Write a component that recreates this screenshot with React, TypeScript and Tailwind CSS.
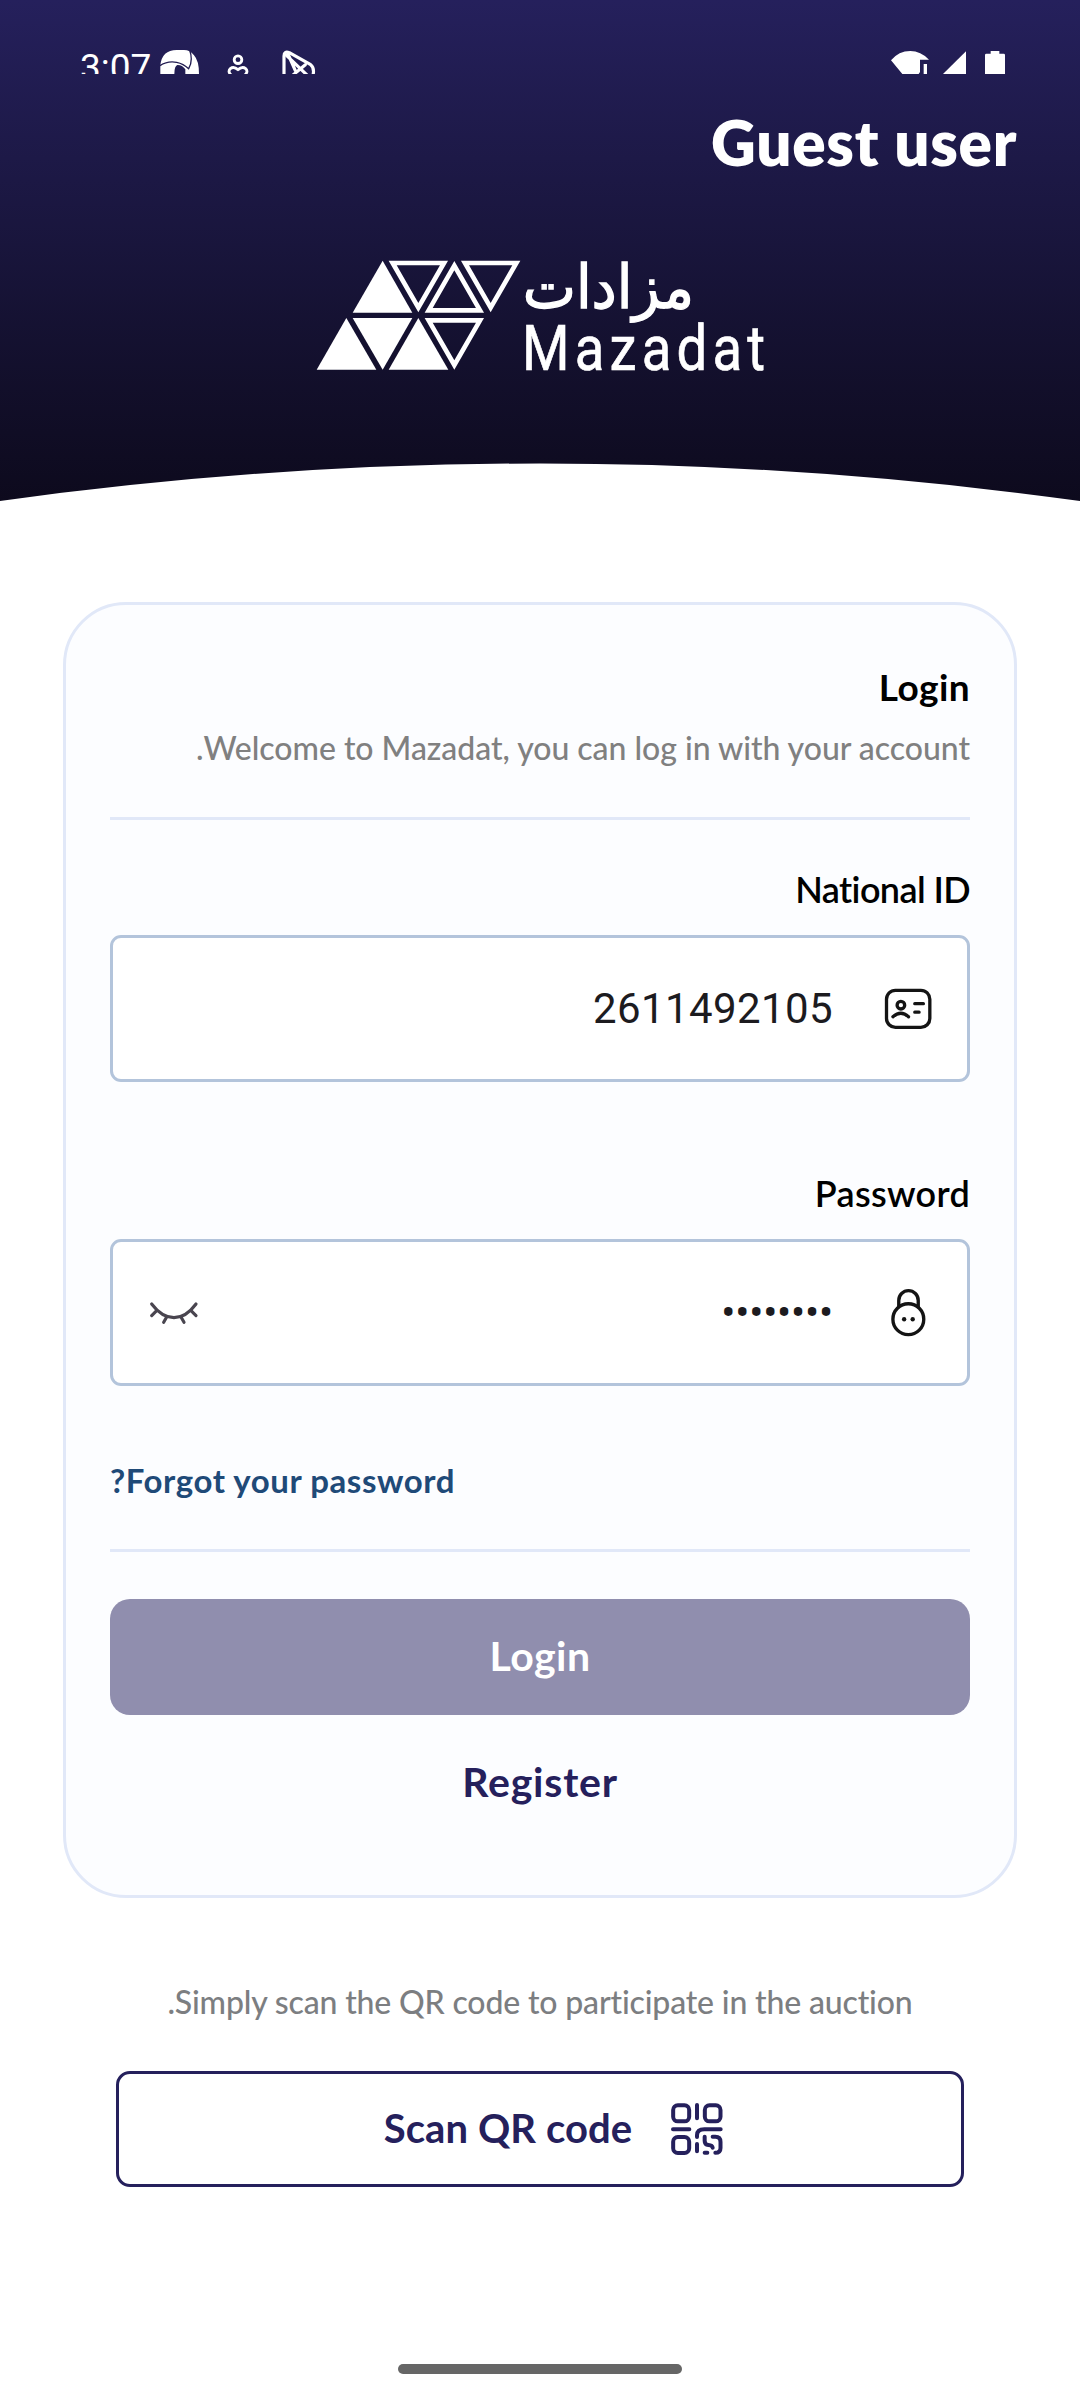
import type { ReactNode } from "react";

function StatusBar() {
  return (
    <div dir="ltr" className="flex h-[74px] w-full items-start overflow-hidden text-white">
      <span className="mt-[48px] ml-[80px] w-[80px] font-[Roboto,sans-serif] text-[37px] leading-[40px] tracking-[0px] whitespace-nowrap">
        3:07
      </span>
      <svg className="mt-[48px] h-[26px] w-[157px] shrink-0" viewBox="300 54 471 78" fill="none">
        <path
          d="M301 106Q306 60 350 60H372Q390 60 402 76Q417 92 417 132H376V118Q366 104 352 105Q343 108 343 132H301Z"
          fill="#fff"
        />
        <path d="M300 107Q322 92 350 97Q370 101 386 116Q400 92 389 60" stroke="#221d52" strokeWidth="4" />
        <g stroke="#fff" strokeWidth="8.5" strokeLinecap="round" strokeLinejoin="round">
          <circle cx="534" cy="89" r="11.5" />
          <path d="M514 136Q502 124 511 116Q521 108 534 119Q547 108 557 116Q566 124 554 136" />
        </g>
        <g stroke="#fff" strokeWidth="9.5" strokeLinecap="round" strokeLinejoin="round">
          <path d="M672 140V78Q672 62 688 68L752 104Q764 113 759 136" />
          <path d="M677 74L742 136M684 72L706 122M736 104L698 136" />
        </g>
      </svg>
      <svg className="mt-[50px] mr-[74px] ml-auto h-[24px] w-[116px] shrink-0" viewBox="630 60 348 72" fill="#fff">
        <path d="M633 91Q656 63 691 63Q722 63 747 89H720V126L716 132H667Z" />
        <path d="M731 102H741V132H731Z" />
        <path d="M789 132L858 64V132Z" />
        <path d="M915 75Q915 71 919 71H932V63H958V71H971Q975 71 975 75V132H915Z" />
      </svg>
    </div>
  );
}

function Logo() {
  return (
    <svg className="h-[150px] w-[480px]" viewBox="0 0 1440 450" fill="#fff" direction="ltr">
      <path d="M248 62L337 218H158Z" />
      <path d="M139 234L229 389H50Z" />
      <path d="M158 234H337L248 389Z" />
      <path d="M355 234L445 389H266Z" />
      <g fill="none" stroke="#fff" strokeWidth="14">
        <path d="M278 69H432L355 203Z" />
        <path d="M463 77L540 211H386Z" />
        <path d="M495 69H649L572 203Z" />
        <path d="M386 241H540L463 375Z" />
      </g>
      <text
        x="1182"
        y="203"
        direction="rtl"
        fontFamily="DejaVu Sans, sans-serif"
        fontSize="180"
        textLength="514"
        lengthAdjust="spacingAndGlyphs"
        stroke="#fff"
        strokeWidth="4"
      >
        مزادات
      </text>
      <text
        transform="translate(666 389) scale(0.86 1)"
        fontFamily="Roboto, sans-serif"
        fontSize="190"
        textLength="848"
        lengthAdjust="spacing"
        stroke="#fff"
        strokeWidth="2"
      >
        Mazadat
      </text>
    </svg>
  );
}

function IdCardIcon() {
  return (
    <svg className="h-[42px] w-[49px] shrink-0" viewBox="970 203 146 127" fill="none" stroke="#141414" strokeWidth="10" strokeLinecap="round">
      <rect x="976.5" y="210" width="131" height="112" rx="27" />
      <circle cx="1020" cy="255" r="11.5" />
      <path d="M996 290Q1020 269 1043 290M1062 250.500H1088M1062 276H1075" />
    </svg>
  );
}

function LockIcon() {
  return (
    <svg className="mx-[6px] h-[49px] w-[37px] shrink-0" viewBox="627 387 110 146" fill="none" stroke="#141414" strokeWidth="10">
      <path d="M653 444V424A29 29 0 0 1 711 424V444" />
      <circle cx="681.500" cy="480" r="46" />
      <circle cx="669" cy="480" r="6.500" fill="#141414" stroke="none" />
      <circle cx="694.500" cy="480" r="6.500" fill="#141414" stroke="none" />
    </svg>
  );
}

function ClosedEyeIcon() {
  return (
    <svg className="h-[24px] w-[50px] shrink-0" viewBox="176 244 150 72" fill="none" stroke="#49454f" strokeWidth="9.500" strokeLinecap="round">
      <path d="M184 253Q215 294 251 294Q287 294 317 253" />
      <path d="M199 273L184 288M229 292L220 308M272 292L281 308M302 273L317 288" />
    </svg>
  );
}

function QrIcon() {
  return (
    <svg className="h-[54px] w-[54px] shrink-0" viewBox="899 124 162 162" fill="none" stroke="#25205c" strokeWidth="12" strokeLinecap="round">
      <rect x="908.500" y="134" width="48" height="48" rx="14" />
      <rect x="1003.500" y="134" width="47" height="48" rx="14" />
      <rect x="908.500" y="229" width="48" height="48" rx="14" />
      <path d="M980 133V173M908 206H957M1051 206H1002Q980 206 980 224V229M980 250V272" />
      <path d="M1027 228.500H1035Q1050.500 228.500 1050.500 244V262Q1050.500 276.500 1035 276.500" />
      <path d="M1003 228V240Q1003 252 1014 253Q1026 254 1027 261M1003 276.500H1011" />
    </svg>
  );
}

function Field({ label, icon, children, trailing }: { label: string; icon: ReactNode; children: ReactNode; trailing?: ReactNode }) {
  return (
    <div>
      <div className="text-[36px] leading-[44px] font-semibold text-black">{label}</div>
      <div className="mt-6 flex h-[147px] items-center rounded-[11px] border-[3px] border-[#b3c4db] bg-white pr-[34px] pl-[36px] text-[#1c1b1f]">
        {icon}
        <div className="mr-[51px] font-[Roboto,sans-serif] text-[42px] leading-none">{children}</div>
        <div className="mr-auto flex">{trailing}</div>
      </div>
    </div>
  );
}

export default function App() {
  return (
    <div dir="rtl" className="flex h-[2400px] w-[1080px] flex-col overflow-hidden bg-white font-[Lato,sans-serif]">
      <header className="flex h-[501px] shrink-0 flex-col bg-linear-to-b from-[#25205c] to-[#0d0a1d]">
        <StatusBar />
        <h1 className="mt-[32px] pr-[63px] text-[62px] leading-[72px] font-extrabold tracking-[0.7px] text-white">
          Guest user
        </h1>
        <div className="mt-[62px] flex justify-center">
          <Logo />
        </div>
        <svg className="mt-auto block h-[38px] w-full" viewBox="0 0 1080 38" fill="#fff">
          <path d="M0 38Q540 -37 1080 38Z" />
        </svg>
      </header>

      <main className="flex flex-col">
        <section className="mx-[63px] mt-[101px] flex h-[1296px] flex-col rounded-[63px] border-[3px] border-[#e1e8f8] bg-[#fcfdff] px-[44px] pt-[60px]">
          <h2 className="text-[37px] leading-[44px] font-bold tracking-[0.4px] text-black">Login</h2>
          <p className="mt-[19px] text-[32px] leading-[40px] font-medium tracking-[-0.03px] whitespace-nowrap text-[#808080]">
            Welcome to Mazadat, you can log in with your account.
          </p>
          <div className="mt-[49px] h-[3px] bg-[#e1e8f8]" />

          <div className="mt-[47px] tracking-[-0.6px]">
            <Field label="National ID" icon={<IdCardIcon />}>
              <span className="tracking-[0.4px]">2611492105</span>
            </Field>
          </div>
          <div className="mt-[89px] tracking-[0.3px]">
            <Field label="Password" icon={<LockIcon />} trailing={<ClosedEyeIcon />}>
              <span className="tracking-[-0.2px]">••••••••</span>
            </Field>
          </div>

          <div className="mt-[74px] text-left text-[33px] leading-[40px] font-bold tracking-[0.57px] text-[#1f4a78]">
            Forgot your password?
          </div>
          <div className="mt-[49px] h-[3px] bg-[#e1e8f8]" />

          <button className="mt-[47px] flex h-[116px] w-full shrink-0 items-center justify-center rounded-[20px] bg-[#908eae] pb-[2px] text-[41px] font-bold tracking-[0.4px] text-white">
            Login
          </button>
          <button className="mt-[43px] text-center text-[41px] leading-[48px] font-bold tracking-[0.8px] text-[#25205c]">
            Register
          </button>
        </section>

        <p className="mt-[84px] text-center text-[32px] leading-[40px] font-medium tracking-[-0.16px] text-[#7c7e81]">
          Simply scan the QR code to participate in the auction.
        </p>
        <button className="mx-[116px] mt-[49px] flex h-[116px] items-center justify-center gap-[38px] rounded-[14px] border-[3px] border-[#25205c] pl-[28px] text-[#25205c]">
          <QrIcon />
          <span className="pb-[2px] text-[40px] font-bold tracking-[0.1px]">Scan QR code</span>
        </button>
      </main>

      <div className="mx-auto mt-[177px] h-[10px] w-[284px] shrink-0 rounded-full bg-[#666]" />
    </div>
  );
}
